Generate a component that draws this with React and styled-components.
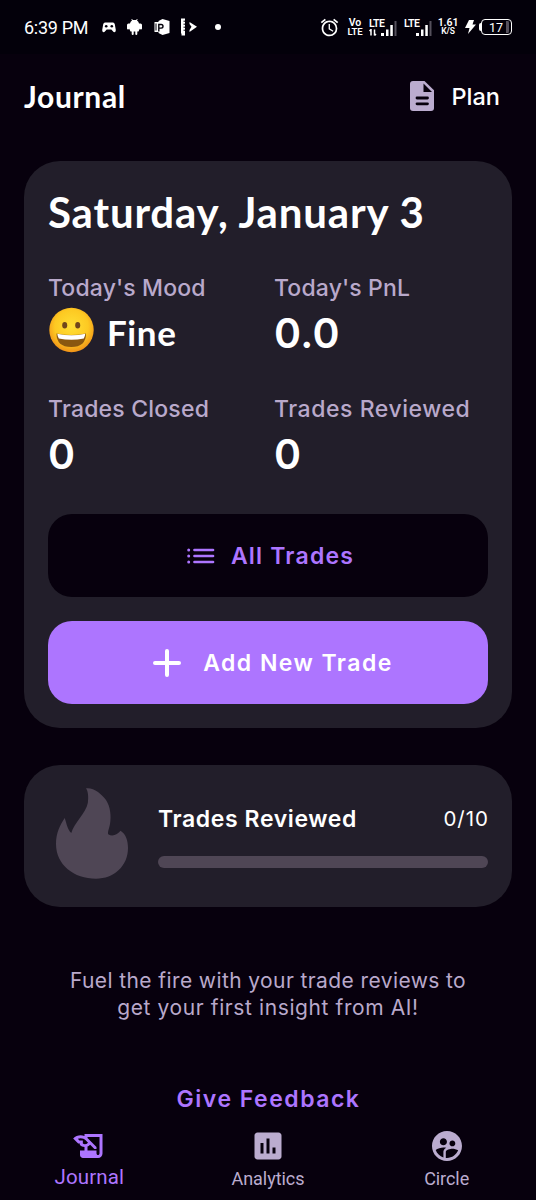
import styled, { createGlobalStyle } from "styled-components";
import { MdAlarm, MdHistoryEdu, MdInsertChart, MdSupervisedUserCircle } from "react-icons/md";

const stats = [
  { label: "Today's Mood", value: "Fine", mood: true, spacing: 0.15 },
  { label: "Today's PnL", value: "0.0", spacing: 0.15 },
  { label: "Trades Closed", value: "0", spacing: 0.2 },
  { label: "Trades Reviewed", value: "0", spacing: 0.55 },
];

const tabs = [
  { name: "Journal", Icon: MdHistoryEdu, active: true },
  { name: "Analytics", Icon: MdInsertChart },
  { name: "Circle", Icon: MdSupervisedUserCircle },
];

const SignalBars = () => (
  <svg width="17" height="16" viewBox="0 0 17 16">
    <path d="M1 13h3v3H1zM6 9.500h2.500v6.500H6zM10.300 5h2.500v11h-2.500z" fill="#fff" />
    <path d="M14.500 1h2v15h-2z" fill="#55505c" />
  </svg>
);

const StatusBar = () => (
  <StatusRow>
    <Clock>6:39 PM</Clock>
    <Notifications>
      <svg width="14" height="11" viewBox="0 0 14 11">
        <path d="M3 .5h8q1.300 0 1.800 1.700l1 5.800q.2 2-1.300 2.200-1 .1-3.200-2.700H4.700Q2.500 10.300 1.500 10.200 0 10 .200 8L1.200 2.200Q1.700.5 3 .5z" fill="#fff" />
        <circle cx="4.200" cy="4.200" r="1.300" fill="#03000a" />
        <circle cx="9.800" cy="4.200" r="1.300" fill="#03000a" />
      </svg>
      <svg width="15" height="16" viewBox="0 0 15 16">
        <path d="M3 4.500Q3.300 2.500 5 1.500L4.300.3 5 0l.9 1.100q1.600-.4 3.200 0L10 0l.7.3L10 1.500Q11.700 2.500 12 4.500h1.500Q15 4.500 15 6v3.500q0 1-1 1t-1.200-.8L11.500 12.500H10.300V15q0 1-1 1t-1-1v-2.500H6.700V15q0 1-1 1t-1-1v-2.500H3.500L2.200 9.700Q2 10.500 1 10.500t-1-1V6Q0 4.500 1.500 4.500z" fill="#fff" />
      </svg>
      <svg width="16" height="16" viewBox="0 0 16 16">
        <path d="M8.500 0L15.500 2v12L8.500 16l-4-2v-1h-4V3h4V2z" fill="#fff" />
        <path d="M4.800 12.500V5.500h2.400a1.700 1.700 0 0 1 0 3.600H5" fill="none" stroke="#03000a" strokeWidth="1.400" />
        <path d="M2 4.500v7" stroke="#03000a" strokeWidth="1" />
      </svg>
      <svg width="17" height="18" viewBox="0 0 17 18">
        <path d="M0 .5h4v17H.5v-2H0z" fill="#fff" />
        <path d="M4 3.200H2.500M4 6.200H2.500M4 9.200H2.500M4 12.200H2.500" stroke="#03000a" strokeWidth="1" />
        <path d="M8.500 4l7.500 4.700L8.500 14V12l2-3.300L8.500 6z" fill="#fff" />
      </svg>
      <Dot />
    </Notifications>
    <AlarmIcon />
    <Stack $w={16} $gap={6} $top={10.5} $bottom={9.5}><span>Vo</span><span>LTE</span></Stack>
    <Network $w={28}>
      <NetworkLabel>LTE</NetworkLabel>
      <svg width="8" height="7" viewBox="0 0 8 7"><path d="M2 0v6.500M0.500 2L2 .5M5.500 .5v6M7 5L5.500 6.500" stroke="#fff" strokeWidth="1.500" fill="none" /></svg>
      <SignalBars />
    </Network>
    <Network $w={27}>
      <NetworkLabel>LTE</NetworkLabel>
      <SignalBars />
    </Network>
    <Stack $w={20} $gap={7} $top={10.5} $bottom={8.5}><span>1.61</span><span>K/S</span></Stack>
    <svg width="11" height="16" viewBox="0 0 11 16"><path d="M4 1h5L7.500 5.500H11L3 15l1.500-6H0z" fill="#fff" /></svg>
    <BatteryTip />
    <Battery>17</Battery>
  </StatusRow>
);

const PlanIcon = () => (
  <svg width="24" height="30" viewBox="0 0 24 30">
    <path d="M3 0h11.500L24 9.200V27a3 3 0 0 1-3 3H3a3 3 0 0 1-3-3V3a3 3 0 0 1 3-3z" fill="#bbaccf" />
    <path d="M13.500 2.500V11H22z" fill="#07000d" />
    <path d="M7 17h10.500M7 22.800h10.500" stroke="#07000d" strokeWidth="2.800" strokeLinecap="round" />
  </svg>
);

const ListIcon = () => (
  <svg width="28" height="16" viewBox="0 0 28 16">
    <path d="M7.500 2h18.500M7.500 8h18.500M7.500 14h18.500" stroke="#ad75ff" strokeWidth="2.700" strokeLinecap="round" />
    <path d="M1.700 2h.01M1.700 8h.01M1.700 14h.01" stroke="#ad75ff" strokeWidth="3" strokeLinecap="round" />
  </svg>
);

const PlusIcon = () => (
  <svg width="28" height="28" viewBox="0 0 28 28">
    <path d="M14 2v24M2 14h24" stroke="#fff" strokeWidth="4" strokeLinecap="round" />
  </svg>
);

const Flame = () => (
  <svg width="80" height="96" viewBox="0 0 80 96">
    <path
      d="M34 3.300C41 2 50 9 54 15C58.500 22 59.300 31 58 39C57.300 43 55.500 47 56.200 49.200C60.500 52 65.800 49.500 68.500 45.700C74 49 76 56 76 63C76 81 62 93.700 44 93.700C22 93.700 4 80 4 59C4 48 8 40 12.700 33C14.500 38 15.500 45 19.300 48C22 38 34 28 35.800 18C36.700 12 36 6 34 3.300Z"
      fill="#4f4655"
    />
  </svg>
);

const Smiley = () => (
  <svg width="46" height="46" viewBox="0 0 46 46">
    <defs>
      <radialGradient id="face" cx=".5" cy=".42" r=".58">
        <stop offset="0" stopColor="#ffdf35" />
        <stop offset=".65" stopColor="#fdc922" />
        <stop offset="1" stopColor="#f19218" />
      </radialGradient>
    </defs>
    <circle cx="23.500" cy="23" r="22.200" fill="url(#face)" />
    <ellipse cx="16.700" cy="18.200" rx="2.500" ry="3.300" fill="#70461b" />
    <ellipse cx="29.700" cy="18.200" rx="2.500" ry="3.300" fill="#70461b" />
    <path d="M8.500 26.500Q23 29.500 38 26.500Q38 40 23.300 40Q8.500 40 8.500 26.500Z" fill="#8a5710" />
    <path d="M9.300 26.800Q23.500 29.800 37.300 26.800Q37 29.500 35.800 31.500Q23.500 34 10.800 31.500Q9.500 29.500 9.300 26.800Z" fill="#fff" />
  </svg>
);

export default function App() {
  return (
    <Screen>
      <GlobalStyle />
      <StatusBar />
      <Header>
        <Title>Journal</Title>
        <PlanButton><PlanIcon />Plan</PlanButton>
      </Header>
      <Summary>
        <DateHeading>Saturday, January 3</DateHeading>
        <StatsGrid>
          {stats.map(({ label, value, mood, spacing }) => (
            <Stat key={label}>
              <StatLabel $spacing={spacing}>{label}</StatLabel>
              <StatValue $mood={mood}>{mood && <Smiley />}{value}</StatValue>
            </Stat>
          ))}
        </StatsGrid>
        <Button $gap={16}><ListIcon />All Trades</Button>
        <Button $primary $gap={22}><PlusIcon />Add New Trade</Button>
      </Summary>
      <ReviewCard>
        <Flame />
        <Progress>
          <ProgressHead>
            <ProgressTitle>Trades Reviewed</ProgressTitle>
            <ProgressCount>0/10</ProgressCount>
          </ProgressHead>
          <Track />
        </Progress>
      </ReviewCard>
      <Hint>Fuel the fire with your trade reviews to<br /><HintEnd>get your first insight from AI!</HintEnd></Hint>
      <Feedback>Give Feedback</Feedback>
      <TabBar>
        {tabs.map(({ name, Icon, active }) => (
          <Tab key={name} $active={active}>
            <Icon size={36} />
            <TabName $active={active}>{name}</TabName>
          </Tab>
        ))}
      </TabBar>
    </Screen>
  );
}

const GlobalStyle = createGlobalStyle`
  body {
    margin: 0;
    background: #07000d;
  }
  * {
    box-sizing: border-box;
  }
  svg {
    flex-shrink: 0;
  }
`;

const Screen = styled.div`
  width: 536px;
  height: 1200px;
  display: flex;
  flex-direction: column;
  overflow: hidden;
  background: #07000d;
  color: #fff;
  font-family: Inter, sans-serif;
  white-space: nowrap;
`;

const StatusRow = styled.div`
  height: 54px;
  flex-shrink: 0;
  display: flex;
  align-items: center;
  padding: 0 24px;
  background: #03000a;
  font-family: Roboto, sans-serif;
`;

const Clock = styled.div`
  width: 77.5px;
  font-size: 18px;
  letter-spacing: -0.3px;
`;

const Notifications = styled.div`
  display: flex;
  align-items: center;
  gap: 11.5px;
  flex: 1;
`;

const Dot = styled.div`
  width: 6px;
  height: 6px;
  margin-left: 5px;
  border-radius: 50%;
  background: #fff;
`;

const AlarmIcon = styled(MdAlarm)`
  width: 21px;
  height: 21px;
  margin-right: 7px;
`;

const Stack = styled.div`
  width: ${p => p.$w}px;
  margin-right: ${p => p.$gap}px;
  display: flex;
  flex-direction: column;
  align-items: center;
  font-weight: 600;
  line-height: 9.5px;
  letter-spacing: -0.1px;

  span:first-child {
    font-size: ${p => p.$top}px;
  }
  span:last-child {
    font-size: ${p => p.$bottom}px;
  }
`;

const Network = styled.div`
  width: ${p => p.$w}px;
  height: 17px;
  margin-right: 7px;
  display: grid;
  grid-template-columns: 11px 17px;
  grid-template-rows: 9px 8px;
  align-items: end;

  svg:last-child {
    grid-column: 2;
    grid-row: 1 / 3;
  }
`;

const NetworkLabel = styled.span`
  font-size: 10.5px;
  font-weight: 600;
  line-height: 9px;
  letter-spacing: -0.5px;
`;

const BatteryTip = styled.div`
  width: 2px;
  height: 8px;
  margin-left: 3px;
  border-radius: 2px 0 0 2px;
  background: #fff;
`;

const Battery = styled.div`
  width: 31px;
  height: 16px;
  display: flex;
  align-items: center;
  justify-content: center;
  border: 1.5px solid #fff;
  border-radius: 4px;
  font-size: 12.5px;
  background: linear-gradient(90deg, transparent 82%, #55505c 82%);
  background-clip: content-box;
  padding: 1px 2px 1px 1px;
`;

const Header = styled.header`
  height: 107px;
  flex-shrink: 0;
  display: flex;
  align-items: flex-start;
  justify-content: space-between;
  padding: 22px 36px 0 24px;
`;

const Title = styled.h1`
  margin: 0;
  font: 700 30px/40px Lato, sans-serif;
  letter-spacing: 0.65px;
`;

const PlanButton = styled.div`
  height: 40px;
  display: flex;
  align-items: center;
  gap: 18px;
  font-size: 23.5px;
  font-weight: 500;
`;

const Summary = styled.section`
  height: 567px;
  flex-shrink: 0;
  margin: 0 24px;
  padding: 24px;
  border-radius: 36px;
  background: #221e2a;
`;

const DateHeading = styled.h2`
  margin: 0;
  font: 700 42px/54px Lato, sans-serif;
  letter-spacing: 0.83px;
`;

const StatsGrid = styled.div`
  display: grid;
  grid-template-columns: 226px 1fr;
  grid-auto-rows: 121px;
  margin: 34px 0 -1px;
`;

const Stat = styled.div`
  display: flex;
  flex-direction: column;
`;

const StatLabel = styled.div`
  color: #b9a9cb;
  font-size: 23px;
  font-weight: 500;
  line-height: 31px;
  letter-spacing: ${p => p.$spacing}px;
`;

const StatValue = styled.div`
  height: 56px;
  display: flex;
  align-items: center;
  gap: 13px;
  padding-top: ${p => p.$mood ? 0 : 2}px;
  font: ${p => p.$mood ? "700 35px Lato, sans-serif" : "600 41px Inter, sans-serif"};
  letter-spacing: ${p => p.$mood ? 0.6 : 0.3}px;

  svg {
    margin-top: -5px;
  }
`;

const Button = styled.div`
  height: 83px;
  display: flex;
  align-items: center;
  justify-content: center;
  gap: ${p => p.$gap}px;
  margin-bottom: 24px;
  padding: ${p => p.$primary ? "1px 0 0 10px" : "1px 0 0 5px"};
  border-radius: 24px;
  background: ${p => p.$primary ? "#ad75ff" : "#07000d"};
  color: ${p => p.$primary ? "#fff" : "#ad75ff"};
  font-size: 23px;
  font-weight: 600;
  line-height: 30px;
  letter-spacing: ${p => p.$primary ? 1.45 : 1.2}px;
`;

const ReviewCard = styled.section`
  height: 142px;
  flex-shrink: 0;
  display: flex;
  margin: 37px 24px 0;
  padding: 20px 24px 0 28px;
  gap: 26px;
  border-radius: 36px;
  background: #221e2a;
`;

const Progress = styled.div`
  flex: 1;
  padding-top: 19px;
`;

const ProgressHead = styled.div`
  height: 30px;
  display: flex;
  align-items: center;
  justify-content: space-between;
`;

const ProgressTitle = styled.div`
  font-size: 23px;
  font-weight: 600;
  letter-spacing: 0.6px;
`;

const ProgressCount = styled.div`
  margin: -2px -1px 0 0;
  font-size: 20.5px;
  letter-spacing: 1px;
`;

const Track = styled.div`
  height: 12px;
  margin-top: 22px;
  border-radius: 6px;
  background: #4f4655;
`;

const Hint = styled.p`
  margin: 60px 0 0;
  color: #b9a9cb;
  font-size: 21px;
  line-height: 27px;
  letter-spacing: 0.4px;
  text-align: center;
`;

const HintEnd = styled.span`
  letter-spacing: 0.6px;
`;

const Feedback = styled.div`
  margin-top: 63px;
  padding-left: 1px;
  color: #ad75ff;
  font-size: 23px;
  font-weight: 600;
  line-height: 30px;
  letter-spacing: 1.5px;
  text-align: center;
`;

const TabBar = styled.nav`
  display: grid;
  grid-template-columns: repeat(3, 1fr);
  margin-top: 14px;
`;

const Tab = styled.div`
  display: flex;
  flex-direction: column;
  align-items: center;
  color: ${p => p.$active ? "#ad75ff" : "#bbaccf"};
`;

const TabName = styled.div`
  font: ${p => p.$active ? "20.5px/26px" : "18px/29px"} Roboto, sans-serif;
  letter-spacing: ${p => p.$active ? 0.1 : -0.05}px;
`;
